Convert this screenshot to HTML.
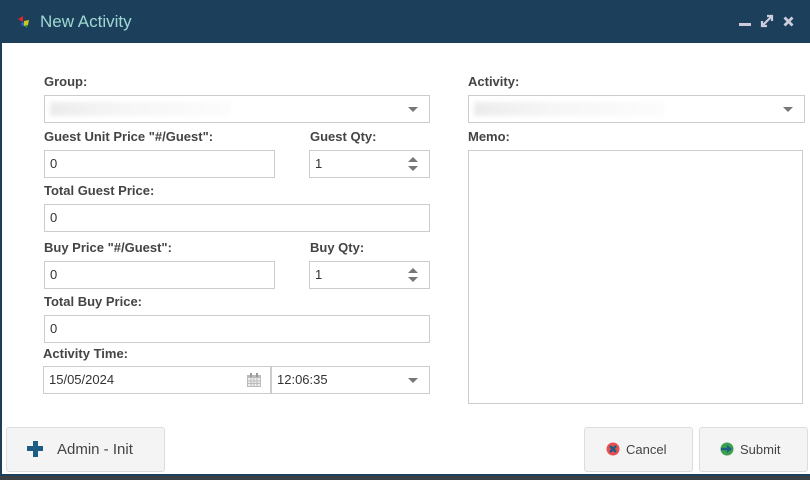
<!DOCTYPE html>
<html><head><meta charset="utf-8"><style>
*{box-sizing:border-box;margin:0;padding:0}
body{width:810px;height:480px;overflow:hidden;background:#fff;font-family:"Liberation Sans",sans-serif;position:relative}
.a{position:absolute}
.hdr{left:0;top:0;width:810px;height:43px;background:#1c405c}
.lb{position:absolute;font-size:13px;font-weight:bold;color:#444;line-height:16px}
.in{position:absolute;border:1px solid #ccc;background:#fff;font-size:13px;color:#333;line-height:26px;padding-left:5px}
.car{position:absolute;width:0;height:0;border-left:5px solid transparent;border-right:5px solid transparent;border-top:5px solid #777}
.sp{position:absolute;width:0;height:0;border-left:5px solid transparent;border-right:5px solid transparent}
.btn{position:absolute;background:#f4f4f4;border:1px solid #ddd;border-radius:3px;font-size:13px;color:#444}
.blur{position:absolute;height:14px;background:linear-gradient(90deg,#ececec,#f6f6f6 40%,#fcfcfc);filter:blur(2px)}
</style></head><body>
<div class="a hdr"></div>
<div class="a" style="left:0;top:43px;width:2px;height:437px;background:#1c405c"></div>
<div class="a" style="left:0;top:474px;width:810px;height:6px;background:#1c405c"></div>
<div class="a" style="left:0;top:476px;width:810px;height:4px;background:#3a3f44"></div>
<svg class="a" style="left:16px;top:14px" width="16" height="16" viewBox="0 0 16 16"><path d="M2 5 L7 2 L7 8Z" fill="#e02828"/><path d="M8 7 L13 6 L12 11 L8 12Z" fill="#c8c820"/><path d="M8 12 L12 11 L11 14Z" fill="#2a8a3a"/><path d="M5 9 L8 8 L8 12 L6 12Z" fill="#3060c0"/></svg>
<div class="a" style="left:40px;top:12px;font-size:17px;color:#9fd8d2">New Activity</div>
<div class="a" style="left:739px;top:23px;width:12px;height:3px;background:#ccd"></div>
<svg class="a" style="left:760px;top:14px" width="14" height="14" viewBox="0 0 14 14"><path d="M2 12 L12 2 M7 2 H12 V7 M2 7 V12 H7" stroke="#ccd" stroke-width="2.2" fill="none"/></svg>
<svg class="a" style="left:783px;top:16px" width="11" height="11" viewBox="0 0 11 11"><path d="M1.5 1.5 L9.5 9.5 M9.5 1.5 L1.5 9.5" stroke="#ccd" stroke-width="2.8"/></svg>

<div class="lb" style="left:44px;top:74px">Group:</div>
<div class="in" style="left:44px;top:95px;width:386px;height:28px"></div>
<div class="blur" style="left:50px;top:102px;width:180px"></div>
<div class="car" style="left:408px;top:107px"></div>

<div class="lb" style="left:468px;top:74px">Activity:</div>
<div class="in" style="left:468px;top:95px;width:337px;height:28px"></div>
<div class="blur" style="left:474px;top:102px;width:190px"></div>
<div class="car" style="left:783px;top:107px"></div>

<div class="lb" style="left:44px;top:129px">Guest Unit Price "#/Guest":</div>
<div class="in" style="left:44px;top:150px;width:231px;height:28px">0</div>
<div class="lb" style="left:310px;top:129px">Guest Qty:</div>
<div class="in" style="left:309px;top:150px;width:121px;height:28px">1</div>
<div class="sp" style="left:408px;top:157px;border-bottom:5px solid #777"></div>
<div class="sp" style="left:408px;top:166px;border-top:5px solid #777"></div>

<div class="lb" style="left:468px;top:129px">Memo:</div>
<div class="in" style="left:468px;top:150px;width:335px;height:254px"></div>

<div class="lb" style="left:44px;top:183px">Total Guest Price:</div>
<div class="in" style="left:44px;top:204px;width:386px;height:28px">0</div>

<div class="lb" style="left:44px;top:240px">Buy Price "#/Guest":</div>
<div class="in" style="left:44px;top:261px;width:231px;height:28px">0</div>
<div class="lb" style="left:310px;top:240px">Buy Qty:</div>
<div class="in" style="left:309px;top:261px;width:121px;height:28px">1</div>
<div class="sp" style="left:408px;top:268px;border-bottom:5px solid #777"></div>
<div class="sp" style="left:408px;top:277px;border-top:5px solid #777"></div>

<div class="lb" style="left:44px;top:294px">Total Buy Price:</div>
<div class="in" style="left:44px;top:315px;width:386px;height:28px">0</div>

<div class="lb" style="left:43px;top:346px">Activity Time:</div>
<div class="in" style="left:43px;top:366px;width:228px;height:28px">15/05/2024</div>
<svg class="a" style="left:246px;top:372px" width="16" height="16" viewBox="0 0 16 16"><rect x="1" y="3" width="14" height="12" fill="#bbb"/><rect x="2" y="6" width="12" height="8" fill="#eee"/><path d="M5 6V14M8 6V14M11 6V14M2 9H14M2 11.5H14" stroke="#bbb" stroke-width="1"/><rect x="4" y="1" width="2" height="4" fill="#999"/><rect x="10" y="1" width="2" height="4" fill="#999"/></svg>
<div class="in" style="left:271px;top:366px;width:159px;height:28px">12:06:35</div>
<div class="car" style="left:408px;top:378px"></div>

<div class="btn" style="left:6px;top:427px;width:159px;height:45px"></div>
<div class="a" style="left:27px;top:446px;width:16px;height:5px;background:#1d5d84"></div>
<div class="a" style="left:32.5px;top:440.5px;width:5px;height:16px;background:#1d5d84"></div>
<div class="a" style="left:57px;top:441px;font-size:15px;color:#444">Admin - Init</div>

<div class="btn" style="left:584px;top:427px;width:109px;height:45px"></div>
<svg class="a" style="left:606px;top:442px" width="14" height="14" viewBox="0 0 14 14"><circle cx="7" cy="7" r="6.5" fill="#e85050"/><path d="M4 4L10 10M10 4L4 10" stroke="#1d5d84" stroke-width="2.4"/></svg>
<div class="a" style="left:626px;top:442px;font-size:13px;color:#444">Cancel</div>

<div class="btn" style="left:699px;top:427px;width:109px;height:45px"></div>
<svg class="a" style="left:720px;top:442px" width="14" height="14" viewBox="0 0 14 14"><circle cx="7" cy="7" r="6.5" fill="#3aa050"/><path d="M1 7H9" stroke="#1d5d84" stroke-width="2.4"/><path d="M7 3L12 7L7 11Z" fill="#1d5d84"/></svg>
<div class="a" style="left:740px;top:442px;font-size:13px;color:#444">Submit</div>
</body></html>
